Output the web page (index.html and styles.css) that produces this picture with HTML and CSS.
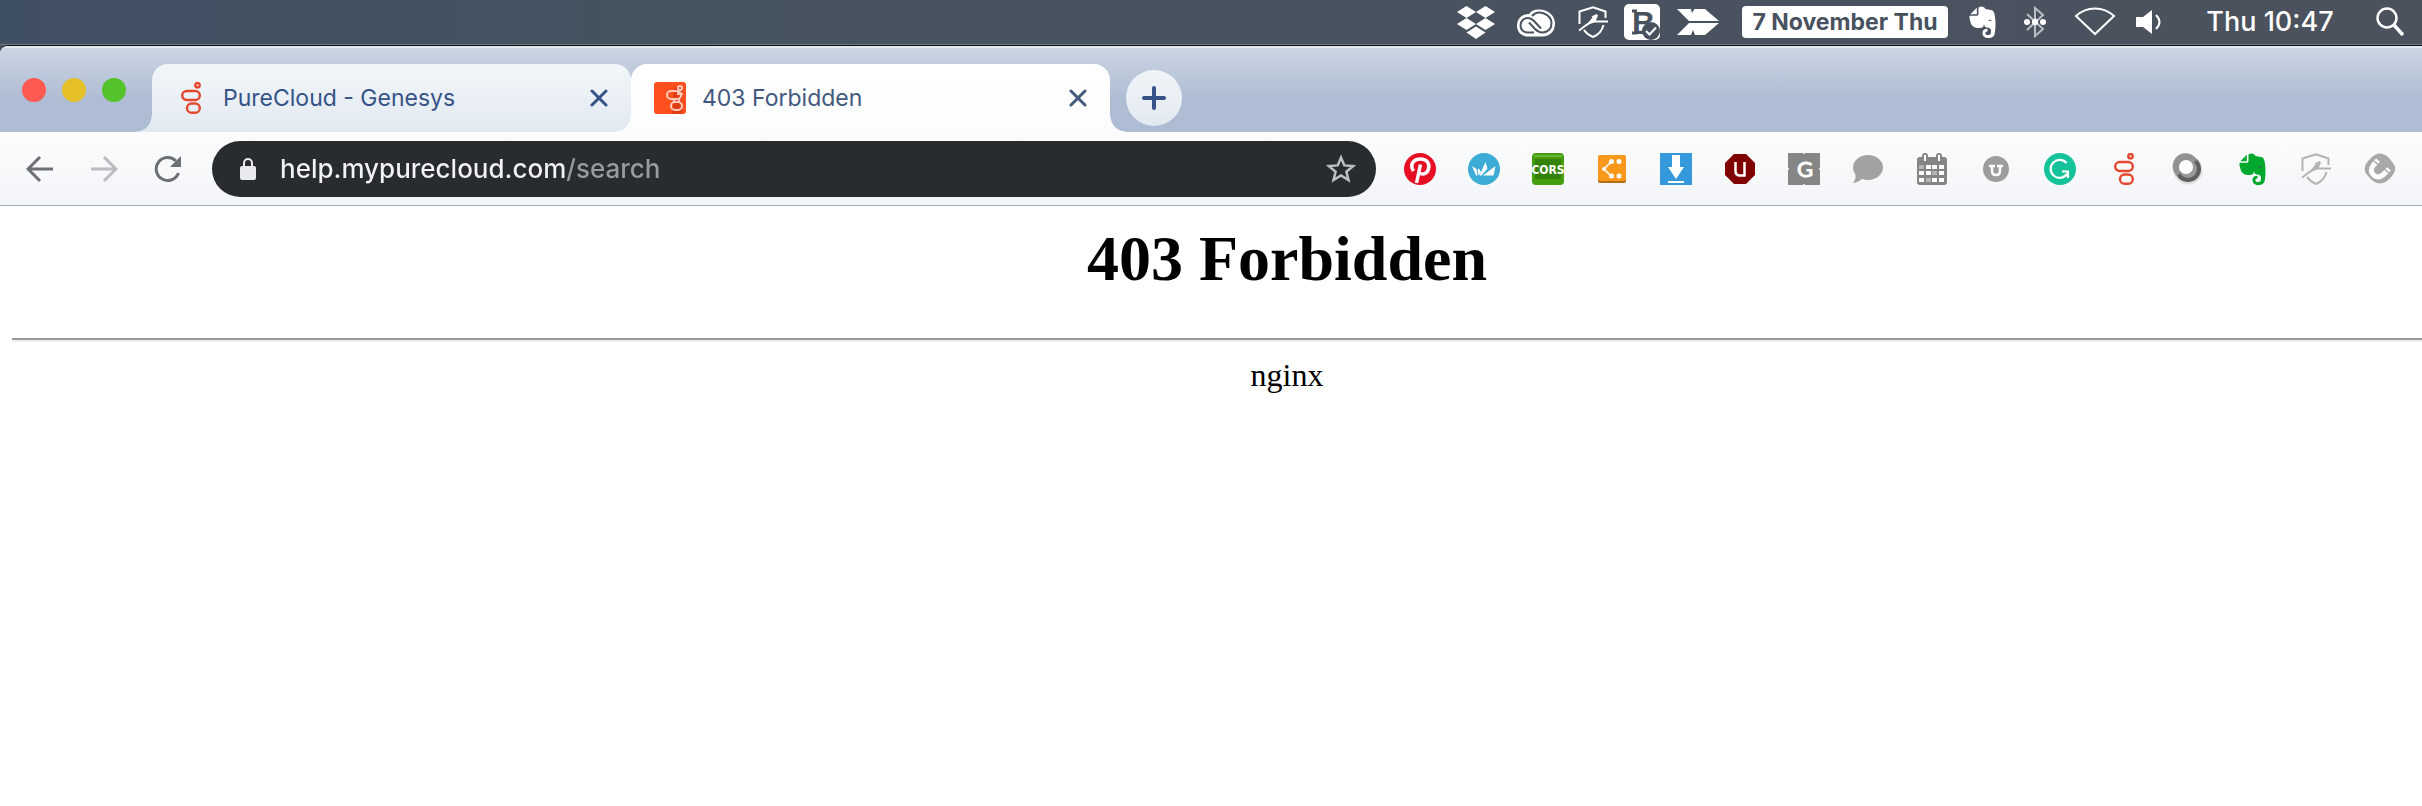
FILE: index.html
```
<!DOCTYPE html>
<html lang="en">
<head>
<meta charset="UTF-8">
<title>403 Forbidden</title>
<link rel="stylesheet" href="styles.css">
</head>
<body>

<!-- shapes used more than once -->
<svg class="defs" width="0" height="0" aria-hidden="true">
	<symbol id="genesys" viewBox="0 0 20 32">
		<g fill="none" stroke="#e5482f" stroke-width="2.400">
			<circle cx="16.500" cy="3.200" r="2.200"/>
			<rect x="1.200" y="9" width="17.600" height="9" rx="4.500"/>
			<rect x="6" y="21.500" width="12.800" height="9.300" rx="4.600"/>
		</g>
	</symbol>
	<symbol id="elephant" viewBox="-1 0 28 32">
		<path fill="currentColor" d="M9.500 1.500C12-.5 15.500.5 16.500 3L22 4C25 4.600 25.500 7 26 11C26.800 17 26.600 24 25.500 28.500C24.500 31.500 21 32 19 32C15 32 13.500 29.500 13.500 27C13.500 24 15.500 22.800 18.500 22.800V25.400C17 25.400 16.400 26 16.400 27.200C16.400 28.500 17.500 29 19 29C21.500 29 22 28 22 25C22 22.500 20.500 22 18 21.600C16 21.300 15.500 20 15 18.500C14.500 21 13.500 22 10.500 22C5 22 2.500 20 1.500 16C.5 12.500 0 11 .8 9.800H7C9 9.800 9.500 9 9.500 7.500Z"/>
		<path fill="currentColor" d="M7.800 1.800V8.300H1.300Z"/>
		<path class="eye" d="M19 14.800Q21 12.600 22.800 15Q21 14.800 19 14.800Z"/>
	</symbol>
	<symbol id="shield" viewBox="0 0 30 32">
		<g fill="none" stroke="currentColor" stroke-width="2">
			<path d="M1.500 18V5.500L15 1.200L27.500 5.500V12"/>
			<path d="M25.500 19C24 25 20 29 15 31C11 29.500 8 27 6 24"/>
			<path d="M1 24.500C6 21 11 15.500 17 15.500H30"/>
		</g>
		<path fill="currentColor" d="M9 18L14.500 11.500L13.500 10.500L18.500 8L20 9.500L17.500 15.500L12 17.500Z"/>
	</symbol>
	<symbol id="cross" viewBox="0 0 18 18">
		<path d="M2 2L16 16M16 2L2 16" fill="none" stroke="currentColor" stroke-width="3" stroke-linecap="round"/>
	</symbol>
</svg>

<header class="menubar">
	<svg width="40" height="36" viewBox="0 0 40 36">
		<path fill="#fff" d="M10.500 2L20 8L10.500 14L1 8ZM29.500 2L39 8L29.500 14L20 8ZM10.500 14L20 20L10.500 26L1 20ZM29.500 14L39 20L29.500 26L20 20ZM20 22.500L29.500 28.500L20 35L10.500 28.500Z"/>
	</svg>
	<svg width="42" height="36" viewBox="0 0 42 36">
		<path fill="#fff" d="M13 10C16 6 20 5.500 23 5.500C32 5.500 39 11.500 39 19.500C39 27 34 32.500 26.500 32.500H12C5 32.500 1 27.500 1 21.500C1 15 6 10 13 10Z"/>
		<g fill="none" stroke="#48535f" stroke-width="2">
			<path d="M18 28.500H12C7.500 28.500 4.500 25.500 4.500 21.500C4.500 17 8 14 12 14C15 14 16.500 15.500 18 17L25 24.500"/>
			<path d="M16 12C19 8.500 24 8 28 9.500C33 11.500 35.500 15 35.500 19.500C35.500 25 31.500 28.500 26.500 28.500C23 28.500 21 27 19 25L13 18.500"/>
		</g>
	</svg>
	<div class="menubar-apps">
		<svg class="white" width="30" height="32"><use href="#shield"/></svg>
		<svg width="36" height="36" viewBox="0 0 36 36">
			<rect width="36" height="36" rx="5" fill="#fff"/>
			<path d="M8 7H13M8 29H13" stroke="#48525f" stroke-width="3"/>
			<text x="8" y="30" class="icon-bold">B</text>
			<circle cx="27" cy="27" r="9" fill="#48525f"/>
			<path d="M22 27L25.500 30.500L32 23.500" fill="none" stroke="#fff" stroke-width="2"/>
		</svg>
		<svg width="46" height="28" viewBox="0 0 46 28">
			<path fill="#fff" d="M1 1H15L16 5L18.500 1H29L43 13H13ZM13 15H43L29 27H19L17 22L15 27H1Z"/>
			<path d="M13 14H42" stroke="#48525f"/>
		</svg>
	</div>
	<span class="date">7 November Thu</span>
	<svg class="white" width="28" height="32"><use href="#elephant"/></svg>
	<svg width="38" height="34" viewBox="0 0 38 34">
		<path d="M11 9L27 24L19 31V3L27 10L11 25" fill="none" stroke="#b9bec5" stroke-width="2"/>
		<g fill="#fff"><circle cx="11" cy="17" r="3"/><circle cx="19" cy="17" r="3.200"/><circle cx="27" cy="17" r="3"/></g>
	</svg>
	<svg width="42" height="30" viewBox="0 0 42 30">
		<path d="M2 9C13-1 29-1 40 9L21 27Z" fill="none" stroke="#fff" stroke-width="2"/>
	</svg>
	<svg width="26" height="26" viewBox="0 0 26 26">
		<path fill="#fff" d="M0 8H7L16 1V25L7 18H0Z"/>
		<path d="M20 6Q27 13 20 20" fill="none" stroke="#fff" stroke-width="2"/>
	</svg>
	<time class="clock">Thu 10:47</time>
	<svg width="28" height="30" viewBox="0 0 28 30">
		<circle cx="11" cy="11" r="9.500" fill="none" stroke="#fff" stroke-width="2.500"/>
		<path d="M18 18L27 28" stroke="#fff" stroke-width="3.500"/>
	</svg>
</header>

<div class="browser">
	<nav class="tabstrip">
		<div class="lights">
			<button class="light light-red" aria-label="Close window"></button>
			<button class="light light-yellow" aria-label="Minimise window"></button>
			<button class="light light-green" aria-label="Zoom window"></button>
		</div>
		<div class="tab">
			<svg class="favicon" width="32" height="32"><use href="#genesys"/></svg>
			<a class="tab-title" href="#">PureCloud - Genesys</a>
			<button class="tab-close" aria-label="Close tab"><svg width="18" height="18"><use href="#cross"/></svg></button>
		</div>
		<div class="tab tab-active">
			<svg class="favicon" width="32" height="32" viewBox="0 0 32 32">
				<rect width="32" height="32" rx="3" fill="#ff4f1f"/>
				<path d="M20 6L28 4V32H18Z" fill="#e23c16"/>
				<g fill="none" stroke="#ffc9b8" stroke-width="2">
					<circle cx="26" cy="6" r="2"/>
					<rect x="13" y="9" width="14" height="8" rx="4"/>
					<rect x="17" y="20" width="11" height="8" rx="4"/>
					<path d="M24 9V12H29M19 17L21 20M26 17L24 20"/>
				</g>
			</svg>
			<a class="tab-title" href="#">403 Forbidden</a>
			<button class="tab-close" aria-label="Close tab"><svg width="18" height="18"><use href="#cross"/></svg></button>
		</div>
		<button class="newtab" aria-label="New tab">
			<svg width="24" height="24" viewBox="0 0 24 24"><path d="M12 2V22M2 12H22" stroke="currentColor" stroke-width="4" stroke-linecap="round"/></svg>
		</button>
	</nav>

	<div class="toolbar">
		<div class="nav-buttons">
			<button aria-label="Back"><svg width="28" height="28" viewBox="0 0 28 28"><path d="M27 14H3M14 2L2 14L14 26" fill="none" stroke="#6c7074" stroke-width="3"/></svg></button>
			<button aria-label="Forward"><svg width="28" height="28" viewBox="0 0 28 28"><path d="M1 14H25M14 2L26 14L14 26" fill="none" stroke="#babcbf" stroke-width="3"/></svg></button>
			<button aria-label="Reload"><svg width="28" height="28" viewBox="0 0 28 28"><path d="M24.500 18A11.500 11.500 0 1 1 22 6" fill="none" stroke="#6c7074" stroke-width="3"/><path d="M27 1V12H16Z" fill="#6c7074"/></svg></button>
		</div>

		<div class="omnibox">
			<svg width="16" height="22" viewBox="0 0 16 22">
				<rect y="8" width="16" height="14" rx="2" fill="#e8eaed"/>
				<path d="M4 9V5A4 4 0 0 1 12 5V9" fill="none" stroke="#e8eaed" stroke-width="2"/>
			</svg>
			<input class="address" type="text" aria-label="Address" value="help.mypurecloud.com/search">
			<button aria-label="Bookmark this page">
				<svg width="30" height="30" viewBox="0 0 30 30"><path d="M15 3.500L18.300 11.400L27 12.100L20.400 17.700L22.500 26L15 21.500L7.500 26L9.600 17.700L3 12.100L11.700 11.400Z" fill="none" stroke="#bcbfc3" stroke-width="2.500"/></svg>
			</button>
		</div>

		<div class="extensions">
			<svg viewBox="0 0 32 32">
				<circle cx="16" cy="16" r="16" fill="#e60f23"/>
				<path d="M9.500 18C5 11 10 6 16.500 6C23 6 26 10.500 24.500 16C23 21.500 17 22.500 15 19M16.500 11.500L12.500 30" fill="none" stroke="#fff" stroke-width="3.500"/>
			</svg>
			<svg viewBox="0 0 32 32">
				<circle cx="16" cy="16" r="16" fill="#3cabd5"/>
				<path fill="#fff" d="M4 13L8.500 16L9.500 22.500H8ZM10.500 22.500L9.500 16.500L11 15.500L13 19ZM11.500 22.500L17.500 9L19.500 15.500L13.500 22.500ZM15 22.500L27.500 13L25.500 22.500Z"/>
			</svg>
			<svg viewBox="0 0 32 32">
				<rect width="32" height="32" rx="4" fill="#459c0d"/>
				<rect x="3" y="6" width="26" height="20" fill="#348307"/>
				<path d="M2 3H30" stroke="#69b735" stroke-width="2"/>
				<text x="16" y="21" class="icon-cors">CORS</text>
			</svg>
			<svg viewBox="0 0 32 32">
				<rect x="2" y="3" width="28" height="27" rx="2" fill="#b06d12"/>
				<rect x="2" y="2" width="28" height="26" rx="2" fill="#f9991c"/>
				<path d="M15 9L8 16L15 23" fill="none" stroke="#fff" stroke-width="1.500"/>
				<g fill="#fff"><circle cx="15.500" cy="8.500" r="2.500"/><circle cx="23" cy="8.500" r="2.500"/><circle cx="8" cy="16" r="2"/><circle cx="15.500" cy="23" r="2.500"/><circle cx="23" cy="23" r="2.500"/></g>
			</svg>
			<svg viewBox="0 0 32 32">
				<rect width="32" height="32" fill="#3498db"/>
				<path fill="#fff" d="M12 2H20V14H24L16 26L8 14H12ZM8 28H24V30H8Z"/>
			</svg>
			<svg viewBox="0 0 32 32">
				<path fill="#800000" d="M10 1H22L31 10V22L22 31H10L1 22V10Z"/>
				<path d="M11.500 9V18Q11.500 22.500 16 22.500H20.500V9" fill="none" stroke="#fff" stroke-width="2.500"/>
			</svg>
			<svg viewBox="0 0 32 32">
				<rect width="32" height="32" rx="1" fill="#868686"/>
				<g fill="#f9fafb"><circle cx="16" cy="0" r="1"/><circle cx="16" cy="32" r="1"/><circle cx="0" cy="16" r="1"/><circle cx="32" cy="16" r="1"/></g>
				<text x="17" y="24" class="icon-sans">G</text>
			</svg>
			<svg viewBox="0 0 32 32">
				<ellipse cx="16" cy="14.500" rx="15" ry="12.500" fill="#a2a2a2"/>
				<path d="M3 18Q5 25 1 30Q8 29 12 24Z" fill="#a2a2a2"/>
			</svg>
			<svg viewBox="0 0 32 32">
				<rect x="1" y="4" width="30" height="28" rx="3" fill="#858585"/>
				<rect x="6" y="0" width="6" height="10" rx="3" fill="#858585"/><rect x="20" y="0" width="6" height="10" rx="3" fill="#858585"/>
				<path d="M9 2V8M23 2V8" stroke="#fff" stroke-width="2"/>
				<path fill="#fff" d="M10 12H15V16H10ZM16 12H21V16H16ZM23 12H28V16H23ZM3 18H8V22H3ZM10 18H15V22H10ZM23 18H28V22H23ZM3 25H8V29H3ZM16 25H21V29H16ZM23 25H28V29H23Z"/>
				<path fill="#b5b5b5" d="M3 12H8V16H3ZM16 18H21V22H16ZM10 25H15V29H10Z"/>
			</svg>
			<svg viewBox="0 0 32 32">
				<circle cx="16" cy="16" r="13" fill="#9d9d9d"/>
				<path d="M9 13H15M17 13H23M12 13V18Q12 22 16 22T20 18V13" fill="none" stroke="#fff" stroke-width="2.500"/>
			</svg>
			<svg viewBox="0 0 32 32">
				<circle cx="16" cy="16" r="16" fill="#15c39a"/>
				<path d="M22.500 10A9 9 0 1 0 23 21M18 18.500H24V25" fill="none" stroke="#fff" stroke-width="2.200"/>
			</svg>
			<svg><use href="#genesys"/></svg>
			<svg viewBox="0 0 32 32">
				<circle cx="16" cy="17" r="14.500" fill="#dedede"/>
				<circle cx="16" cy="16" r="13" fill="#5f5f5f"/>
				<path d="M25 7A13 13 0 1 0 5 23Z" fill="#929292"/>
				<circle cx="16" cy="16" r="9" fill="#999"/>
				<circle cx="14" cy="14" r="7" fill="#fff"/>
			</svg>
			<svg class="green"><use href="#elephant"/></svg>
			<svg class="gray"><use href="#shield"/></svg>
			<svg viewBox="0 0 32 32">
				<path d="M7 5Q16-4 25 5L29 10Q34 16 28 23Q16 38 4 23Q-4 15 7 5Z" fill="#a9a9a9"/>
				<path d="M14 7L9.500 12Q5 18 10 22.500Q15 26 20 21L25 16" fill="none" stroke="#fff" stroke-width="5"/>
				<path d="M10 8L16 13M19 15L25 20" stroke="#a9a9a9" stroke-width="1.500"/>
			</svg>
		</div>
	</div>

	<main class="page">
		<h1>403 Forbidden</h1>
		<hr>
		<p>nginx</p>
	</main>
</div>

</body>
</html>
```
FILE: styles.css
```
* {
	box-sizing: border-box;
}

body {
	margin: 0;
	min-height: 100vh;
	background: #4a525e;
	font-family: Inter, "Liberation Sans", sans-serif;
	overflow-x: hidden;
}

svg {
	display: block;
	flex: none;
}

button {
	border: 0;
	padding: 0;
	background: none;
	color: inherit;
}

.defs {
	position: absolute;
}

.eye {
	fill: #48525f;
}

/* colours of shared icons */
.white {
	color: #fff;
}
.green {
	color: #00a82d;
}
.gray {
	color: #b3b3b3;
}

/* text inside icons */
.icon-bold {
	font: bold 32px "Liberation Sans", sans-serif;
	fill: #48525f;
}
.icon-cors {
	font: bold 13px "Liberation Sans Narrow", "DejaVu Sans Condensed", sans-serif;
	font-size: 12px;
	fill: #fff;
	text-anchor: middle;
}
.icon-sans {
	font: 22px Lato, sans-serif;
	fill: #fff;
	stroke: #fff;
	text-anchor: middle;
}

/* menu bar */
.menubar {
	height: 45px;
	padding-right: 18px;
	display: flex;
	align-items: center;
	justify-content: flex-end;
	gap: 20px;
	background: linear-gradient(to right, #405063, #46535f 35%, #4b525e);
	border-bottom: 1px solid #757a80;
	color: #fff;
}
.menubar-apps {
	display: flex;
	align-items: center;
	gap: 16px;
}
.date {
	width: 206px;
	height: 32px;
	border-radius: 4px;
	background: #fff;
	color: #48525f;
	font-size: 23px;
	font-weight: 700;
	line-height: 32px;
	text-align: center;
	white-space: nowrap;
}
.clock {
	width: 128px;
	margin: 0 22px 0 24px;
	font-size: 27px;
	font-weight: 500;
	line-height: 32px;
	text-align: center;
	white-space: nowrap;
}

/* browser window */
.browser {
	min-height: calc(100vh - 45px);
	border-top: 1px solid #0b1017;
	border-top-left-radius: 8px;
	background: #fff;
	overflow: hidden;
}

.tabstrip {
	height: 86px;
	padding-top: 16px;
	border-top: 2px solid #e3eaf2;
	display: flex;
	background: linear-gradient(#cbd5e3, #afbdd4 60%, #adbbd3);
	color: #355387;
}
.lights {
	width: 152px;
	padding: 14px 0 0 22px;
	display: flex;
	gap: 16px;
}
.light {
	width: 24px;
	height: 24px;
	border-radius: 50%;
}
.light-red {
	background: #ff5a52;
}
.light-yellow {
	background: #e6c029;
}
.light-green {
	background: #53c22b;
}

.tab {
	position: relative;
	width: 479px;
	height: 68px;
	padding: 0 23px;
	display: flex;
	align-items: center;
	border-radius: 16px 16px 0 0;
	background: linear-gradient(#f2f6f9, #e2eaf1);
}
.tab::before,
.tab::after {
	content: "";
	position: absolute;
	bottom: 0;
	width: 16px;
	height: 16px;
}
.tab::before {
	right: 100%;
	background: radial-gradient(circle at 0 0, transparent 15px, #e2eaf1 16px);
}
.tab-active {
	background: linear-gradient(#fff, #fbfcfd);
	color: #42587d;
}
.tab-active::before {
	background: radial-gradient(circle at 0 0, transparent 15px, #fbfcfd 16px);
}
.tab-active::after {
	left: 100%;
	background: radial-gradient(circle at 100% 0, transparent 15px, #fbfcfd 16px);
}
.tab-title {
	flex: 1;
	margin-left: 16px;
	color: inherit;
	font-size: 23px;
	text-decoration: none;
	white-space: nowrap;
}

.newtab {
	width: 56px;
	height: 56px;
	margin: 6px 0 0 16px;
	display: flex;
	align-items: center;
	justify-content: center;
	border-radius: 50%;
	background: linear-gradient(#f0f4f8, #e2eaf1);
}

/* toolbar */
.toolbar {
	height: 74px;
	padding: 0 26px;
	display: flex;
	align-items: center;
	background: linear-gradient(#fcfcfd, #f2f5f8);
	border-bottom: 1px solid #a9abae;
}
.nav-buttons {
	display: flex;
	gap: 36px;
	margin-right: 30px;
}
.omnibox {
	flex: 1;
	height: 56px;
	padding: 0 20px 0 28px;
	display: flex;
	align-items: center;
	border-radius: 28px;
	background: #282c2f;
}
.address {
	flex: 1;
	height: 40px;
	margin-left: 24px;
	padding: 0;
	border: 0;
	outline: 0;
	font: 500 26px Inter, "Liberation Sans", sans-serif;
	/* host is bright, the path after it is dimmed */
	background: linear-gradient(to right, #f1f3f4 286px, #989c9f 286px);
	-webkit-background-clip: text;
	background-clip: text;
	-webkit-text-fill-color: transparent;
}
.extensions {
	margin-left: 28px;
	display: flex;
	gap: 32px;
}
.extensions svg {
	width: 32px;
	height: 32px;
}
.extensions .eye {
	fill: #fff;
}

/* page */
.page {
	/* runs past the right edge of the screen */
	margin-right: -152px;
	padding: 16px 12px;
	font-family: "Liberation Serif", serif;
	text-align: center;
}
.page h1 {
	margin: 0;
	font-size: 64px;
	line-height: 74px;
}
.page hr {
	height: 4px;
	margin: 42px 0 14px;
	border: 0;
	border-top: 2px solid #9a9a9a;
	border-bottom: 2px solid #eee;
}
.page p {
	margin: 0;
	font-size: 32px;
	line-height: 38px;
}
```
